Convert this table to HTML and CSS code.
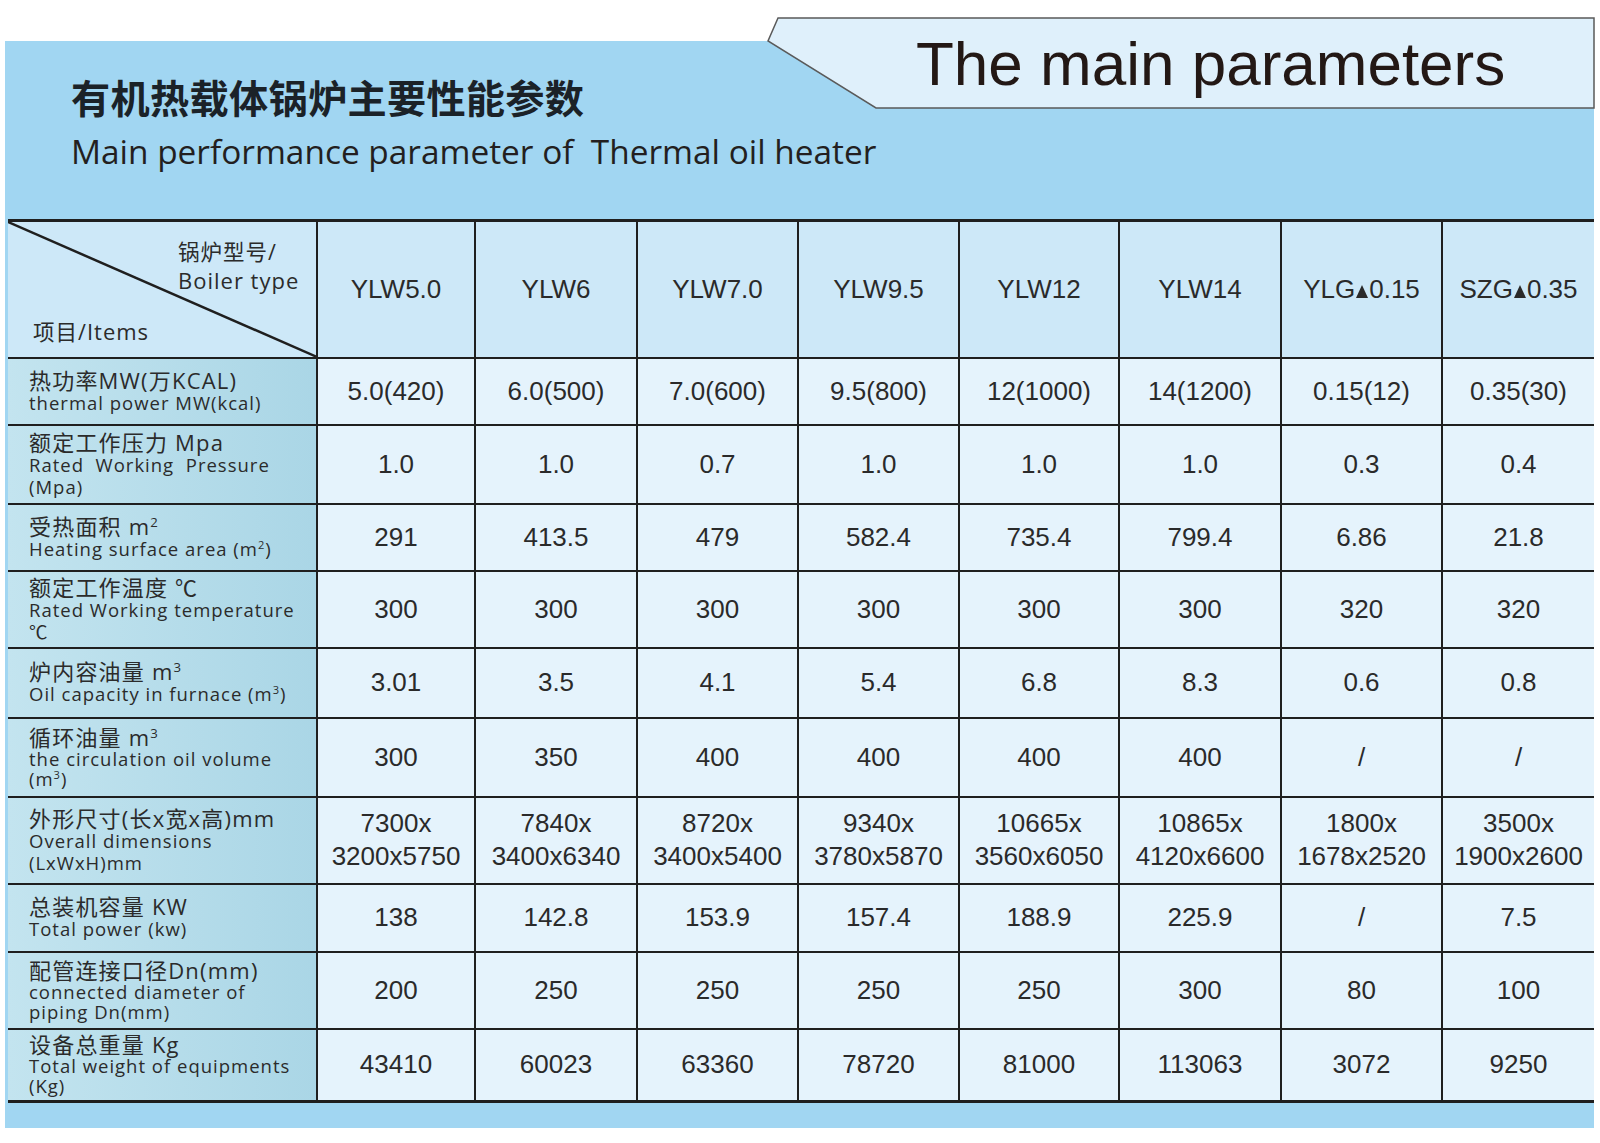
FILE: index.html
```html
<!DOCTYPE html>
<html lang="zh-CN">
<head>
<meta charset="utf-8">
<title>The main parameters</title>
<link rel="stylesheet" href="styles.css">
</head>
<body>
<div class="sheet">
  <div class="tab">
    <svg class="tab-shape" width="828" height="92" viewBox="0 0 828 92" aria-hidden="true">
      <polygon points="11,1 1,24 109,91 827,91 827,1" fill="#dff0fb" stroke="#5a5a5a" stroke-width="1.5"/>
    </svg>
    <div class="tab-text">The main parameters</div>
  </div>
  <header class="head">
    <h1 class="title-cn">有机热载体锅炉主要性能参数</h1>
    <p class="title-en">Main performance parameter of&nbsp; Thermal oil heater</p>
  </header>

  <table class="params">
    <colgroup>
      <col class="c0"><col class="c1"><col class="c2"><col class="c3"><col class="c4"><col class="c5"><col class="c6"><col class="c7"><col class="c8">
    </colgroup>
    <thead>
      <tr class="r-head">
        <th class="corner">
          <svg class="diag" viewBox="0 0 100 100" preserveAspectRatio="none" aria-hidden="true">
            <line x1="0" y1="0" x2="100" y2="100" stroke="#1f1f1f" stroke-width="2.5" vector-effect="non-scaling-stroke"/>
          </svg>
          <div class="corner-inner">
            <div class="corner-top"><span class="cn-s">锅炉型号/</span><br>Boiler type</div>
            <div class="corner-bottom"><span class="cn-s">项目/</span>Items</div>
          </div>
        </th>
        <th>YLW5.0</th><th>YLW6</th><th>YLW7.0</th><th>YLW9.5</th><th>YLW12</th><th>YLW14</th>
        <th>YLG<span class="tri" role="img" aria-label="▲"></span>0.15</th><th>SZG<span class="tri" role="img" aria-label="▲"></span>0.35</th>
      </tr>
    </thead>
    <tbody>
      <tr class="r1">
        <td class="label"><div class="cn">热功率MW(万KCAL)</div><div class="en">thermal power MW(kcal)</div></td>
        <td>5.0(420)</td><td>6.0(500)</td><td>7.0(600)</td><td>9.5(800)</td><td>12(1000)</td><td>14(1200)</td><td>0.15(12)</td><td>0.35(30)</td>
      </tr>
      <tr class="r2">
        <td class="label"><div class="cn">额定工作压力 Mpa</div><div class="en">Rated&nbsp; Working&nbsp; Pressure</div><div class="en">(Mpa)</div></td>
        <td>1.0</td><td>1.0</td><td>0.7</td><td>1.0</td><td>1.0</td><td>1.0</td><td>0.3</td><td>0.4</td>
      </tr>
      <tr class="r3">
        <td class="label"><div class="cn">受热面积 m<sup>2</sup></div><div class="en">Heating surface area (m<sup>2</sup>)</div></td>
        <td>291</td><td>413.5</td><td>479</td><td>582.4</td><td>735.4</td><td>799.4</td><td>6.86</td><td>21.8</td>
      </tr>
      <tr class="r4">
        <td class="label"><div class="cn">额定工作温度 ℃</div><div class="en">Rated Working temperature</div><div class="en">℃</div></td>
        <td>300</td><td>300</td><td>300</td><td>300</td><td>300</td><td>300</td><td>320</td><td>320</td>
      </tr>
      <tr class="r5">
        <td class="label"><div class="cn">炉内容油量 m<sup>3</sup></div><div class="en">Oil capacity in furnace (m<sup>3</sup>)</div></td>
        <td>3.01</td><td>3.5</td><td>4.1</td><td>5.4</td><td>6.8</td><td>8.3</td><td>0.6</td><td>0.8</td>
      </tr>
      <tr class="r6">
        <td class="label"><div class="cn">循环油量 m<sup>3</sup></div><div class="en tight">the circulation oil volume</div><div class="en tight">(m<sup>3</sup>)</div></td>
        <td>300</td><td>350</td><td>400</td><td>400</td><td>400</td><td>400</td><td>/</td><td>/</td>
      </tr>
      <tr class="r7">
        <td class="label"><div class="cn">外形尺寸(长x宽x高)mm</div><div class="en">Overall dimensions</div><div class="en">(LxWxH)mm</div></td>
        <td class="two">7300x<br>3200x5750</td><td class="two">7840x<br>3400x6340</td><td class="two">8720x<br>3400x5400</td><td class="two">9340x<br>3780x5870</td><td class="two">10665x<br>3560x6050</td><td class="two">10865x<br>4120x6600</td><td class="two">1800x<br>1678x2520</td><td class="two">3500x<br>1900x2600</td>
      </tr>
      <tr class="r8">
        <td class="label"><div class="cn">总装机容量 KW</div><div class="en">Total power (kw)</div></td>
        <td>138</td><td>142.8</td><td>153.9</td><td>157.4</td><td>188.9</td><td>225.9</td><td>/</td><td>7.5</td>
      </tr>
      <tr class="r9">
        <td class="label"><div class="cn">配管连接口径Dn(mm)</div><div class="en tight">connected diameter of</div><div class="en tight">piping Dn(mm)</div></td>
        <td>200</td><td>250</td><td>250</td><td>250</td><td>250</td><td>300</td><td>80</td><td>100</td>
      </tr>
      <tr class="r10">
        <td class="label"><div class="cn">设备总重量 Kg</div><div class="en tight">Total weight of equipments</div><div class="en tight">(Kg)</div></td>
        <td>43410</td><td>60023</td><td>63360</td><td>78720</td><td>81000</td><td>113063</td><td>3072</td><td>9250</td>
      </tr>
    </tbody>
  </table>
</div>
</body>
</html>
```

FILE: styles.css
```css
html, body {
  margin: 0;
  padding: 0;
  background: #ffffff;
}

body {
  width: 1600px;
  height: 1143px;
  overflow: hidden;
  font-family: "Open Sans", "Noto Sans CJK SC", sans-serif;
  color: #222;
}

.sheet {
  position: relative;
  margin: 41px 0 0 5px;
  width: 1589px;
  background: #a1d6f2;
  padding-bottom: 25px;
}

/* ---------- header ---------- */
.head {
  height: 178px;
  box-sizing: border-box;
  padding: 32px 0 0 66px;
}

.title-cn {
  margin: 0;
  font-family: "Noto Sans CJK SC", sans-serif;
  font-weight: 700;
  font-size: 39.2px;
  line-height: 46px;
  letter-spacing: 0.3px;
  color: #1b2228;
}

.title-en {
  margin: 10px 0 0;
  font-family: "Open Sans", sans-serif;
  font-weight: 400;
  font-size: 33.4px;
  line-height: 44px;
  color: #231f20;
}

.tab {
  position: absolute;
  left: 762px;
  top: -24px;
  width: 828px;
  height: 92px;
  z-index: 2;
}

.tab-shape {
  position: absolute;
  left: 0;
  top: 0;
}

.tab-text {
  position: relative;
  padding: 16px 0 0 149px;
  font-family: "Liberation Sans", Arial, sans-serif;
  font-size: 62px;
  line-height: 62px;
  color: #231815;
  white-space: nowrap;
}

/* ---------- table ---------- */
.params {
  border-collapse: collapse;
  table-layout: fixed;
  width: 1586px;
  margin-left: 3px;
}

.c0 { width: 309px; }
.c1 { width: 158px; }
.c2 { width: 162px; }
.c3 { width: 161px; }
.c4 { width: 161px; }
.c5 { width: 160px; }
.c6 { width: 162px; }
.c7 { width: 161px; }
.c8 { width: 152px; }

.params th,
.params td {
  border: 2px solid #1f1f1f;
  padding: 0;
  text-align: center;
  vertical-align: middle;
  font-family: "Liberation Sans", Arial, sans-serif;
  font-weight: 400;
  font-size: 26px;
  color: #2a2a2a;
  background: #e5f3fc;
}

.params tr > :first-child { border-left: none; }
.params tr > :last-child { border-right: none; }
.params thead th { border-top: 3px solid #1f1f1f; background: #cde8f8; }
.params tbody tr:last-child td { border-bottom: 3px solid #1f1f1f; }

.tri {
  display: inline-block;
  width: 0;
  height: 0;
  border-left: 6px solid transparent;
  border-right: 6px solid transparent;
  border-bottom: 13px solid #2a2a2a;
  margin: 0 1px;
  vertical-align: 0;
}

.r-head { height: 137px; }
.r1 { height: 67px; }
.r2 { height: 79px; }
.r3 { height: 67px; }
.r4 { height: 77px; }
.r5 { height: 70px; }
.r6 { height: 79px; }
.r7 { height: 87px; }
.r8 { height: 68px; }
.r9 { height: 77px; }
.r10 { height: 73px; }

.params td.two { line-height: 33px; }

.params td.label {
  text-align: left;
  padding-left: 21px;
  background: linear-gradient(to right, #c3e4ef, #aad6e6);
  font-family: "Open Sans", "Noto Sans CJK SC", sans-serif;
  color: #2b2b2b;
  white-space: nowrap;
}

.label .cn {
  font-size: 22px;
  line-height: 23px;
  letter-spacing: 1.2px;
}

.label .en {
  font-size: 18.5px;
  line-height: 22px;
  letter-spacing: 1px;
}

.label .en.tight { line-height: 20px; }

.label sup {
  font-size: 0.6em;
  line-height: 0;
  vertical-align: 0.6em;
}

/* corner cell */
.params th.corner {
  position: relative;
  background: #cde8f8;
  font-family: "Open Sans", "Noto Sans CJK SC", sans-serif;
  font-size: 22px;
  color: #2b2b2b;
  text-align: left;
  letter-spacing: 1px;
}

.diag {
  position: absolute;
  left: 0;
  top: 0;
  width: 100%;
  height: 100%;
}

.corner-inner {
  position: relative;
  height: 134px;
  box-sizing: border-box;
  padding: 15px 0 10px 25px;
  display: flex;
  flex-direction: column;
  justify-content: space-between;
}

.corner-top {
  margin-left: 145px;
  line-height: 29px;
}

.corner-bottom {
  line-height: 29px;
}

.cn-s {
  font-size: 21.5px;
}
```
